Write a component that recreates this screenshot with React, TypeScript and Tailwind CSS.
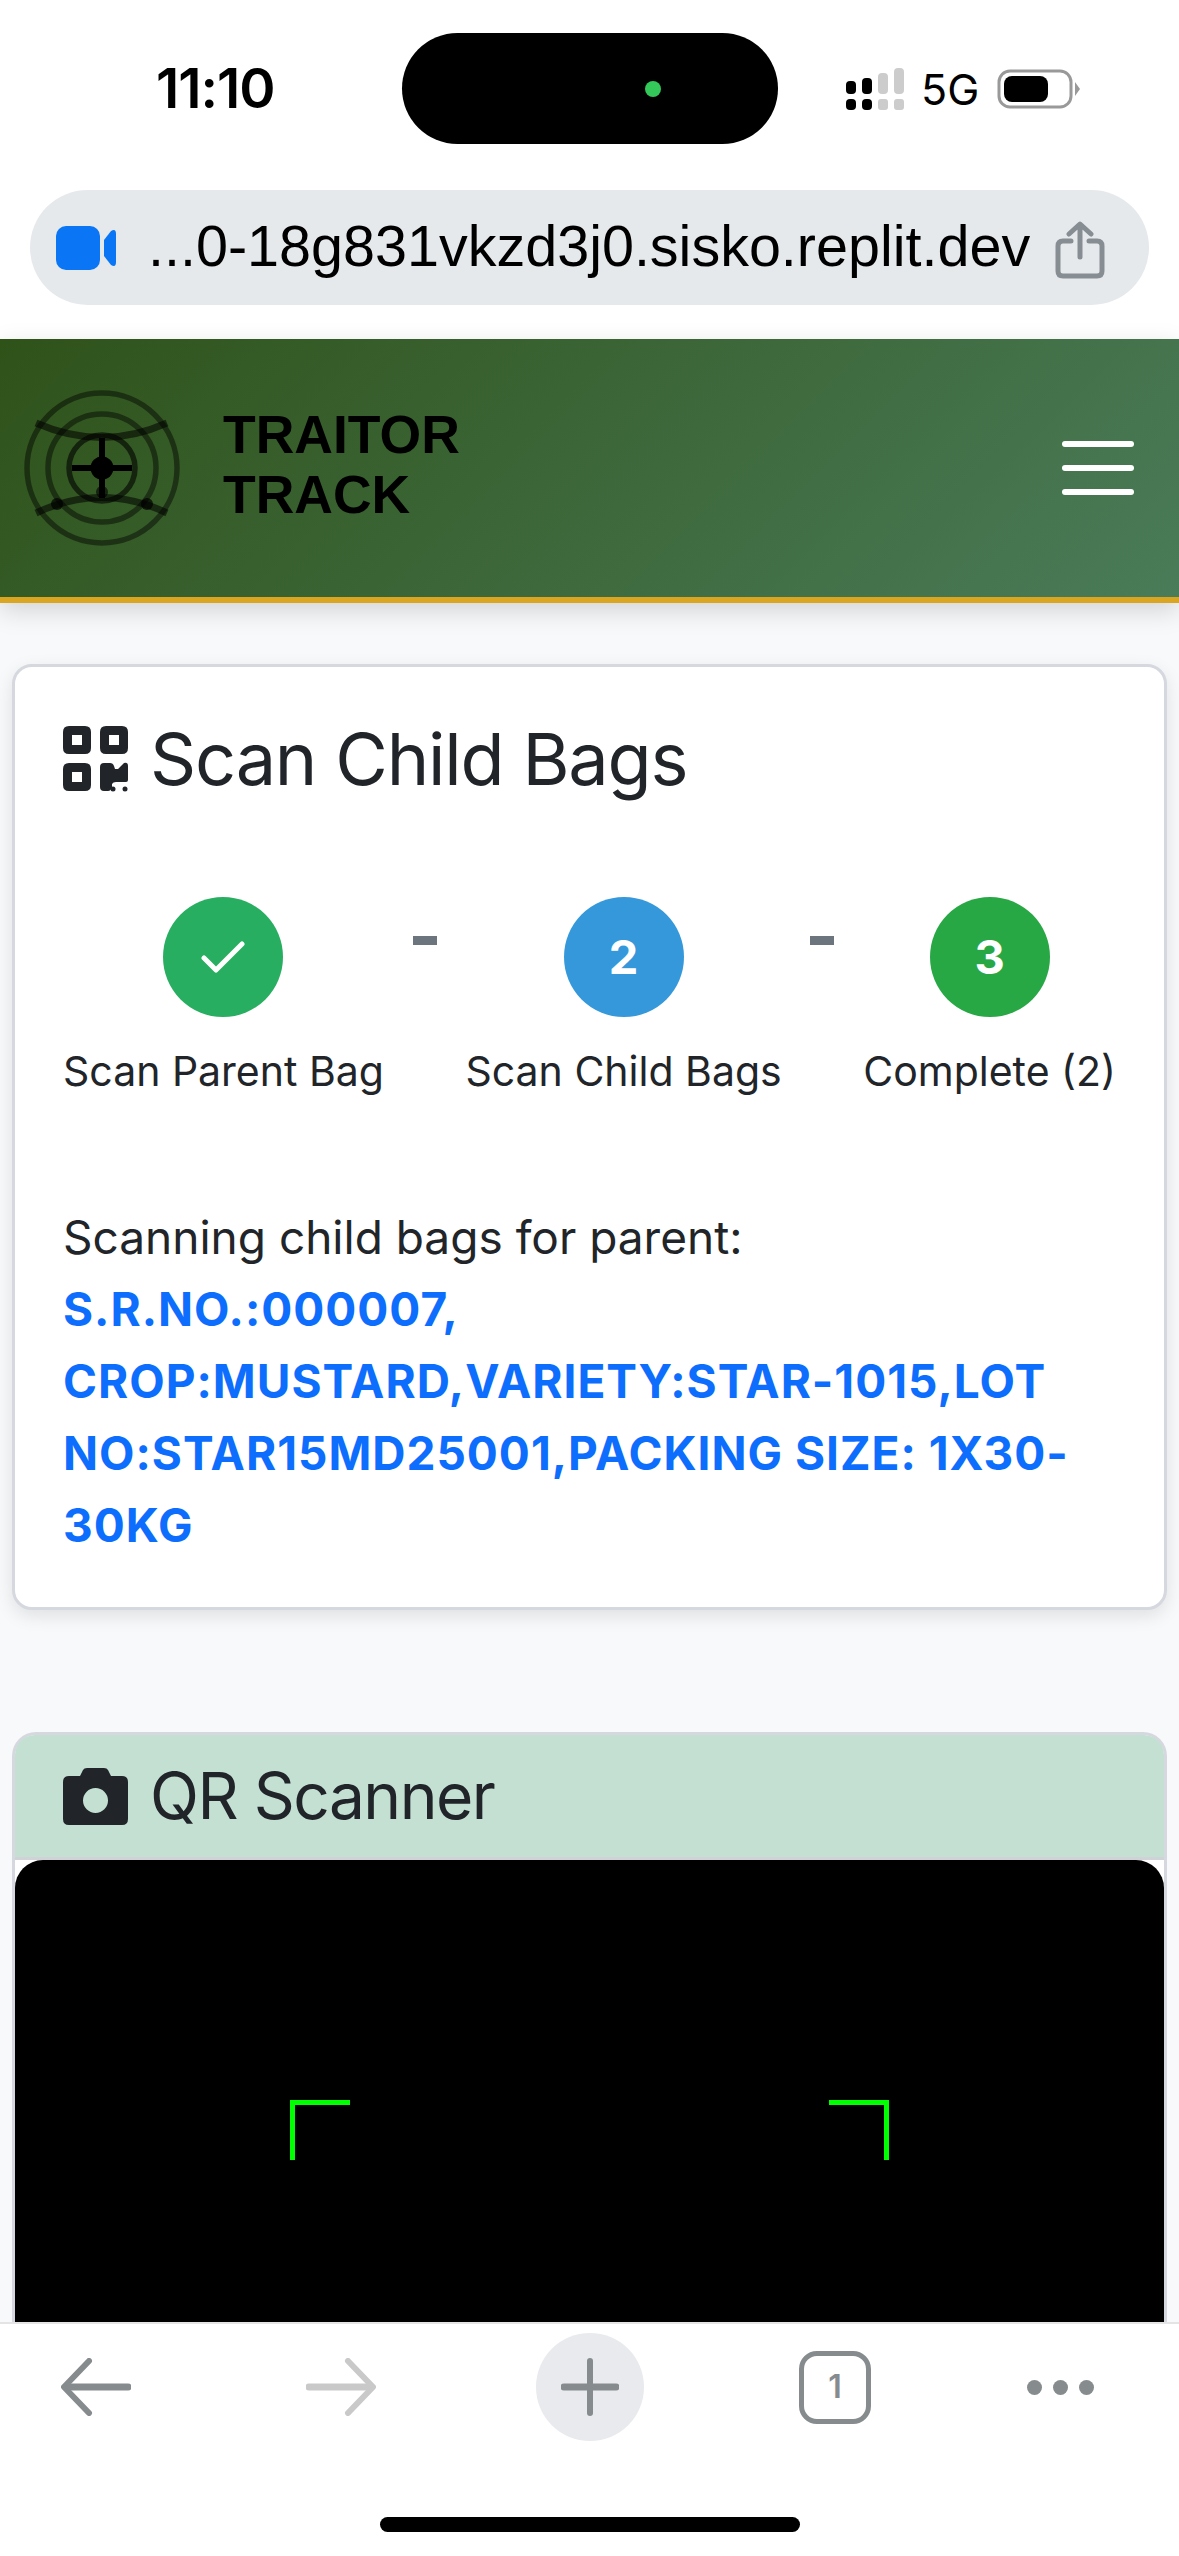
function Logo() {
  return (
    <svg width="160" height="160" viewBox="22 388 160 160" fill="none" className="shrink-0">
      <g stroke="#000" strokeOpacity="0.45" strokeWidth="5.5">
        <circle cx="102" cy="468" r="75" />
        <circle cx="102" cy="468" r="54" />
      </g>
      <circle cx="102" cy="468" r="33" stroke="#000" strokeOpacity="0.6" strokeWidth="5.5" />
      <g stroke="#000" strokeOpacity="0.55" strokeWidth="7">
        <path d="M36 423 Q102 452 167 423" />
        <path d="M36 513 Q102 482 167 513" />
      </g>
      <path d="M72 468H132M102 438V498" stroke="#000" strokeWidth="6" />
      <circle cx="102" cy="468" r="11.5" fill="#000" />
      <circle cx="102" cy="492" r="6" fill="#000" fillOpacity="0.6" />
      <circle cx="57" cy="504" r="6" fill="#000" fillOpacity="0.7" />
      <circle cx="147" cy="504" r="6" fill="#000" fillOpacity="0.7" />
    </svg>
  );
}

function QrIcon() {
  return (
    <svg width="65" height="66" viewBox="0 0 65 66" className="shrink-0 mr-[22px]" fill="#212529" fillRule="evenodd">
      <path d="M6 0H22Q28 0 28 6V22Q28 28 22 28H6Q0 28 0 22V6Q0 0 6 0ZM9 9V19H19V9Z" />
      <path d="M43 0H59Q65 0 65 6V22Q65 28 59 28H43Q37 28 37 22V6Q37 0 43 0ZM46 9V19H56V9Z" />
      <path d="M6 37H22Q28 37 28 43V59Q28 65 22 65H6Q0 65 0 59V43Q0 37 6 37ZM9 46V56H19V46Z" />
      <path d="M41 37H47Q50 37 51 40L52 43H55L61 37Q65 36 65 40V54Q65 56 63 56H53Q50 56 49 58V61Q48 65 45 65H41Q37 65 37 61V41Q37 37 41 37Z" />
      <circle cx="50" cy="63" r="2.5" />
      <circle cx="62" cy="63" r="2.5" />
    </svg>
  );
}

function CameraIcon() {
  return (
    <svg width="65" height="57" viewBox="0 0 65 57" className="shrink-0 mr-[22px]" fill="#212529" fillRule="evenodd">
      <path d="M6 8H17L20 2Q21 0 24 0H41Q44 0 45 2L48 8H59Q65 8 65 14V51Q65 57 59 57H6Q0 57 0 51V14Q0 8 6 8ZM32.5 20A12.5 12.5 0 1 0 32.5 45A12.5 12.5 0 1 0 32.5 20Z" />
    </svg>
  );
}

function StatusBar() {
  return (
    <div className="h-[190px] flex items-start bg-white">
      <div className="w-[402px] pt-[56px] pl-[156px] text-[55px] leading-[64px] font-semibold text-black tracking-[-1px]">
        11:10
      </div>
      <div className="mt-[33px] w-[376px] h-[111px] rounded-full bg-black flex items-center">
        <div className="ml-[243px] w-[16px] h-[16px] rounded-full bg-[#34c759]" />
      </div>
      <div className="pt-[67px] pl-[68px] flex items-center gap-[15px]">
        <svg width="60" height="42" viewBox="0 0 60 42">
          <rect x="0" y="13" width="10" height="13" rx="4" fill="#000" />
          <rect x="16" y="10" width="10" height="16" rx="4" fill="#000" />
          <rect x="32" y="5" width="10" height="21" rx="4" fill="#ccc" />
          <rect x="48" y="0" width="10" height="26" rx="4" fill="#ccc" />
          <rect x="0" y="31" width="10" height="11" rx="4" fill="#000" />
          <rect x="16" y="31" width="10" height="11" rx="4" fill="#000" />
          <rect x="32" y="31" width="10" height="11" rx="3" fill="#ccc" />
          <rect x="48" y="31" width="10" height="11" rx="3" fill="#ccc" />
        </svg>
        <span className="text-[43px] leading-[44px] text-black">5G</span>
        <svg width="84" height="40" viewBox="0 0 84 40" className="ml-[3px]">
          <rect x="2" y="2" width="72" height="36" rx="11" fill="none" stroke="#999" strokeWidth="3" />
          <rect x="7" y="7" width="44" height="26" rx="8" fill="#000" />
          <path d="M78 13 L83 20 L78 27 Z" fill="#999" />
        </svg>
      </div>
    </div>
  );
}

function UrlBar() {
  return (
    <div className="h-[149px] bg-white px-[30px]">
      <div className="h-[115px] rounded-full bg-[#e6e9ec] flex items-center pl-[26px]">
        <svg width="60" height="44" viewBox="0 0 60 44" className="shrink-0">
          <rect x="0" y="0" width="44" height="44" rx="10" fill="#0a76f5" />
          <path d="M48 14 L55 5 Q60 2 60 8 V36 Q60 42 55 39 L48 30 Z" fill="#0a76f5" />
        </svg>
        <span className="ml-[32px] mb-[3px] text-[57.5px] leading-[60px] text-black font-['Liberation_Sans',sans-serif] whitespace-nowrap">
          ...0-18g831vkzd3j0.sisko.replit.dev
        </span>
        <svg width="50" height="58" viewBox="0 0 50 58" fill="none" className="ml-[25px] mt-[5px] shrink-0" stroke="#868e94" strokeWidth="5" strokeLinecap="round" strokeLinejoin="round">
          <path d="M16 20H8Q3 20 3 25V50Q3 55 8 55H42Q47 55 47 50V25Q47 20 42 20H34" />
          <path d="M25 36V4M14 13L25 3L36 13" />
        </svg>
      </div>
    </div>
  );
}

function Navbar() {
  return (
    <div className="h-[264px] border-b-[6px] border-[#daa520] bg-[linear-gradient(135deg,#2f5219,#4a7c59)] flex items-center pl-[22px] pr-[45px] shadow-[0_8px_24px_rgba(0,0,0,0.15)] relative">
      <Logo />
      <div className="ml-[41px] mb-[6px] text-[53.5px] leading-[60px] font-bold text-black font-['Liberation_Sans',sans-serif]">
        <div>TRAITOR</div>
        <div>TRACK</div>
      </div>
      <div className="ml-auto flex flex-col gap-[18px]">
        <div className="w-[72px] h-[6px] rounded-full bg-white" />
        <div className="w-[72px] h-[6px] rounded-full bg-white" />
        <div className="w-[72px] h-[6px] rounded-full bg-white" />
      </div>
    </div>
  );
}

function Step({ label, color, children }: { label: string; color: string; children: React.ReactNode }) {
  return (
    <div className="flex flex-col items-center">
      <div className={`w-[120px] h-[120px] rounded-full flex items-center justify-center text-white text-[47px] font-bold ${color}`}>
        {children}
      </div>
      <div className="mt-[29px] text-[41px] leading-[50px] text-[#212529] whitespace-nowrap">{label}</div>
    </div>
  );
}

function Dash() {
  return <div className="mt-[39px] w-[24px] h-[9px] bg-[#6c757d]" />;
}

function ProgressCard() {
  return (
    <div className="mx-[12px] h-[946px] rounded-[20px] border-[3px] border-[#d5d8de] bg-white shadow-[0_6px_18px_rgba(0,0,0,0.1)] px-[48px] pt-[50px]">
      <h3 className="flex items-center text-[72px] leading-[84px] tracking-[-1.2px] text-[#212529]">
        <QrIcon />
        Scan Child Bags
      </h3>
      <div className="mt-[96px] flex justify-between">
        <Step label="Scan Parent Bag" color="bg-[#27ae60]">
          <svg width="44" height="32" viewBox="0 0 44 32" fill="none" stroke="#fff" strokeWidth="5" strokeLinecap="round" strokeLinejoin="round">
            <path d="M3 17L15 29L41 3" />
          </svg>
        </Step>
        <Dash />
        <Step label="Scan Child Bags" color="bg-[#3498db]">2</Step>
        <Dash />
        <Step label="Complete (2)" color="bg-[#28a745]">3</Step>
      </div>
      <p className="mt-[105px] text-[46px] leading-[72px] text-[#212529]">
        Scanning child bags for parent:
        <br />
        <span className="font-bold tracking-[1px] text-[#0d6efd]">
          S.R.NO.:000007, CROP:MUSTARD,VARIETY:STAR-1015,LOT NO:STAR15MD25001,PACKING SIZE: 1X30-30KG
        </span>
      </p>
    </div>
  );
}

function ScannerCard() {
  return (
    <div className="mt-[122px] mx-[12px] rounded-t-[24px] border-x-[3px] border-t-[3px] border-[#d5d8de] bg-white">
      <div className="h-[125px] bg-[#c3e0d2] rounded-t-[20px] border-b-[3px] border-[#cfd2d6] flex items-center pl-[48px]">
        <CameraIcon />
        <span className="text-[64px] leading-[76px] tracking-[-1.5px] text-[#212529]">QR Scanner</span>
      </div>
      <div className="h-[500px] rounded-t-[28px] bg-black flex justify-between pt-[240px] px-[275px]">
        <div className="w-[60px] h-[60px] border-l-[5px] border-t-[5px] border-[#00ff00]" />
        <div className="w-[60px] h-[60px] border-r-[5px] border-t-[5px] border-[#00ff00]" />
      </div>
    </div>
  );
}

function BottomBar() {
  return (
    <div className="absolute left-0 right-0 bottom-0 h-[234px] bg-white border-t-2 border-[#e4e4e4]">
      <div className="h-[108px] mt-[9px] pl-[61px] flex items-center">
        <svg width="70" height="58" viewBox="0 0 70 58" fill="none" stroke="#868b8e" strokeLinecap="round" strokeLinejoin="round">
          <path d="M28 3L3 29L28 55" strokeWidth="6" />
          <path d="M5 29H67" strokeWidth="7" />
        </svg>
        <svg width="70" height="58" viewBox="0 0 70 58" fill="none" stroke="#c9c9c9" strokeLinecap="round" strokeLinejoin="round" className="ml-[175px]">
          <path d="M42 3L67 29L42 55" strokeWidth="6" />
          <path d="M3 29H65" strokeWidth="7" />
        </svg>
        <div className="ml-[160px] w-[108px] h-[108px] rounded-full bg-[#e9eaee] flex items-center justify-center">
          <svg width="58" height="58" viewBox="0 0 58 58" fill="none" stroke="#868b8e" strokeLinecap="round">
            <path d="M29 3V55" strokeWidth="6" />
            <path d="M3 29H55" strokeWidth="7" />
          </svg>
        </div>
        <div className="ml-[155px] w-[72px] h-[73px] rounded-[18px] border-[5px] border-[#868b8e] flex items-center justify-center text-[32px] font-semibold text-[#868b8e]">
          1
        </div>
        <div className="ml-[156px] flex gap-[11px]">
          <div className="w-[15px] h-[15px] rounded-full bg-[#868b8e]" />
          <div className="w-[15px] h-[15px] rounded-full bg-[#868b8e]" />
          <div className="w-[15px] h-[15px] rounded-full bg-[#868b8e]" />
        </div>
      </div>
      <div className="mt-[76px] mx-auto w-[420px] h-[15px] rounded-full bg-black" />
    </div>
  );
}

export default function App() {
  return (
    <div className="relative w-[1179px] h-[2556px] overflow-hidden bg-[#f8f9fa] font-['Inter',sans-serif]">
      <StatusBar />
      <UrlBar />
      <Navbar />
      <div className="pt-[61px]">
        <ProgressCard />
        <ScannerCard />
      </div>
      <BottomBar />
    </div>
  );
}
